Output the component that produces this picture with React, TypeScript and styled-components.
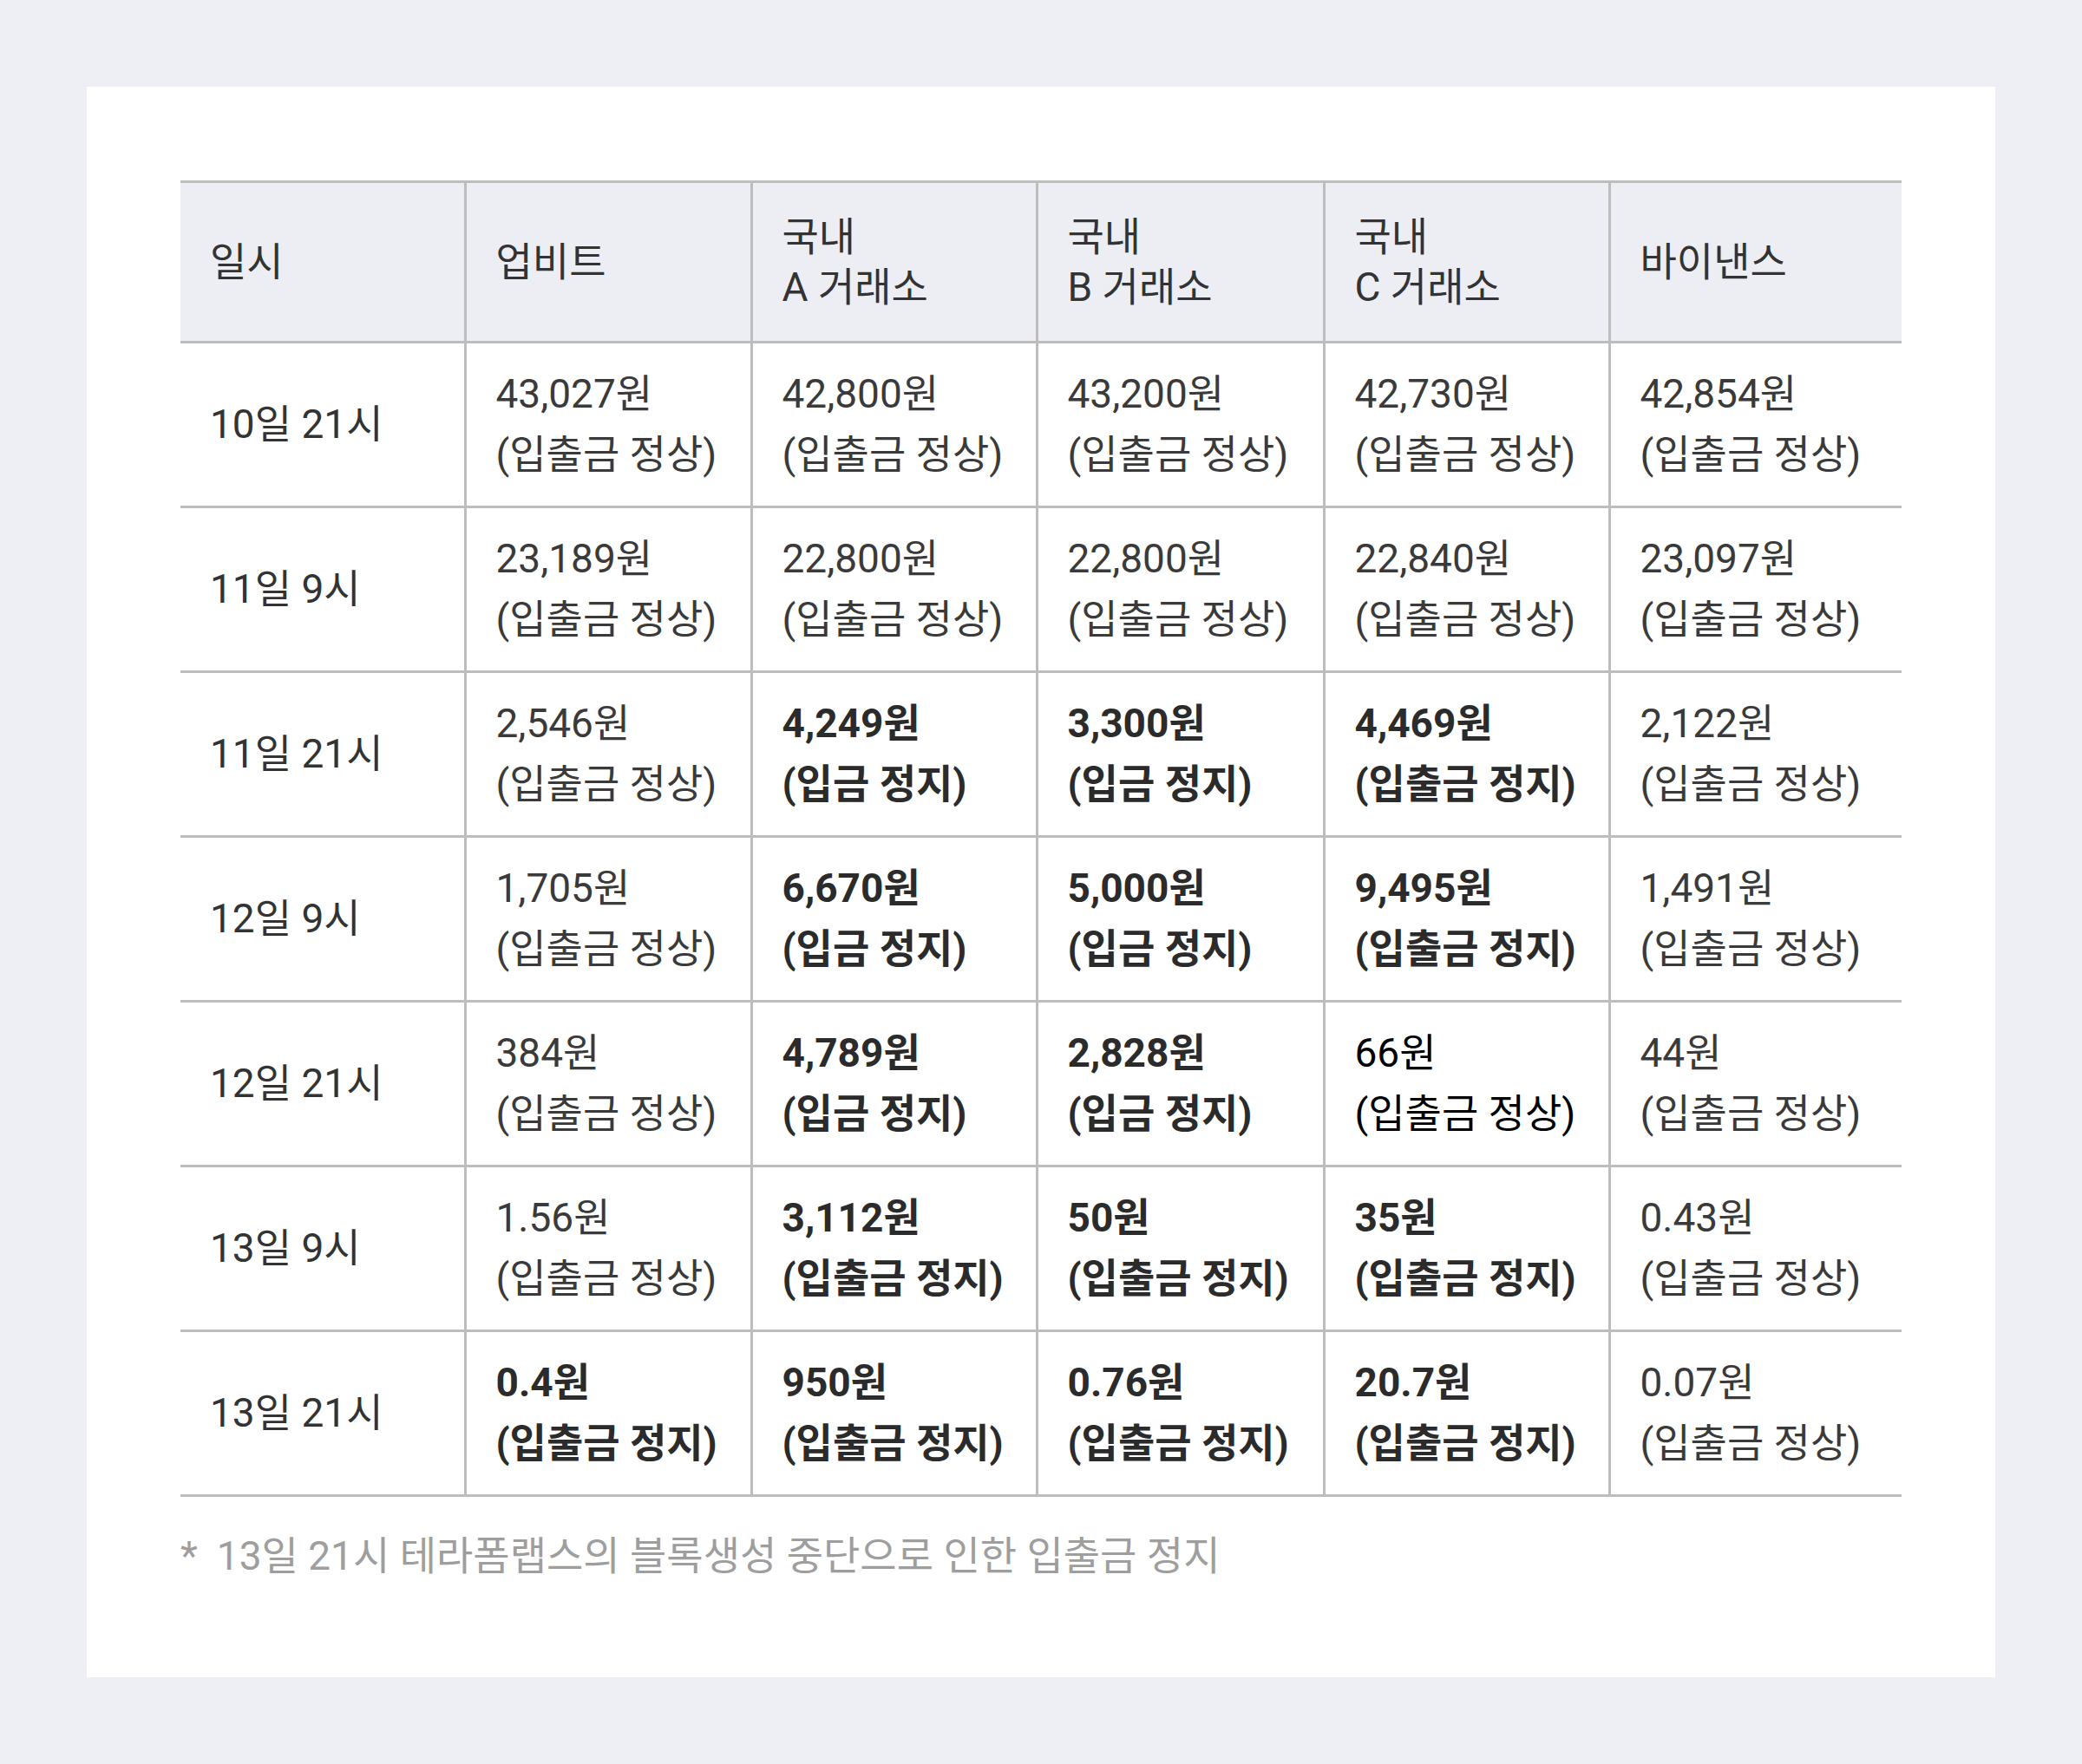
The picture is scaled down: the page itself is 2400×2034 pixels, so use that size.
import styled, { createGlobalStyle } from 'styled-components';

const GlobalStyle = createGlobalStyle`
  html, body {
    margin: 0;
    padding: 0;
    background-color: #eeeff4;
  }
  body {
    font-family: Roboto, "Noto Sans CJK KR", sans-serif;
    color: #333333;
  }
`;

const Page = styled.div`
  padding: 100px;
`;

const Card = styled.section`
  background-color: #ffffff;
  padding: 108px 108px 108px;
`;

const Table = styled.table`
  width: 100%;
  border-collapse: collapse;
  table-layout: fixed;
  border-top: 3px solid #bdbdbd;
`;

const Col = styled.col<{ $width?: number }>`
  width: ${({ $width }) => ($width ? `${$width}px` : 'auto')};
`;

const Th = styled.th`
  text-align: left;
  vertical-align: middle;
  background-color: #edeef3;
  height: 185px;
  padding: 0 34px;
  font-size: 46px;
  line-height: 58px;
  font-weight: 400;
  color: #333333;
  border-bottom: 3px solid #bdbdbd;
  border-left: 3px solid #bdbdbd;
  box-sizing: border-box;

  &:first-child {
    border-left: none;
    padding-left: 34px;
  }
`;

const Td = styled.td`
  vertical-align: middle;
  height: 190px;
  padding: 0 34px 2px;
  font-size: 46px;
  line-height: 70px;
  border-bottom: 3px solid #bdbdbd;
  border-left: 3px solid #bdbdbd;
  box-sizing: border-box;
  white-space: nowrap;

  &:first-child {
    border-left: none;
    padding-left: 34px;
  }
`;

const Value = styled.div<{ $bold?: boolean; $dark?: boolean }>`
  font-weight: ${({ $bold }) => ($bold ? 700 : 400)};
  color: ${({ $bold, $dark }) => ($dark ? '#000000' : $bold ? '#2b2b2b' : '#3a3a3a')};
`;

const Note = styled.p`
  margin: 37px 0 0;
  font-size: 46px;
  line-height: 63px;
  color: #9e9e9e;
  display: flex;
  gap: 22px;
`;

type Cell = { price: string; status: string; bold?: boolean; dark?: boolean };

const ok = (price: string, dark?: boolean): Cell => ({ price, status: '(입출금 정상)', dark });
const stop = (price: string, status: string): Cell => ({ price, status, bold: true });

const colWidths = [328, 330, 329, 331, 329, 0];

const headers = [['일시'], ['업비트'], ['국내', 'A 거래소'], ['국내', 'B 거래소'], ['국내', 'C 거래소'], ['바이낸스']];

const rows: { time: string; cells: Cell[] }[] = [
  { time: '10일 21시', cells: [ok('43,027원'), ok('42,800원'), ok('43,200원'), ok('42,730원'), ok('42,854원')] },
  { time: '11일 9시', cells: [ok('23,189원'), ok('22,800원'), ok('22,800원'), ok('22,840원'), ok('23,097원')] },
  {
    time: '11일 21시',
    cells: [ok('2,546원'), stop('4,249원', '(입금 정지)'), stop('3,300원', '(입금 정지)'), stop('4,469원', '(입출금 정지)'), ok('2,122원')],
  },
  {
    time: '12일 9시',
    cells: [ok('1,705원'), stop('6,670원', '(입금 정지)'), stop('5,000원', '(입금 정지)'), stop('9,495원', '(입출금 정지)'), ok('1,491원')],
  },
  {
    time: '12일 21시',
    cells: [ok('384원'), stop('4,789원', '(입금 정지)'), stop('2,828원', '(입금 정지)'), ok('66원', true), ok('44원')],
  },
  {
    time: '13일 9시',
    cells: [ok('1.56원'), stop('3,112원', '(입출금 정지)'), stop('50원', '(입출금 정지)'), stop('35원', '(입출금 정지)'), ok('0.43원')],
  },
  {
    time: '13일 21시',
    cells: [
      stop('0.4원', '(입출금 정지)'),
      stop('950원', '(입출금 정지)'),
      stop('0.76원', '(입출금 정지)'),
      stop('20.7원', '(입출금 정지)'),
      ok('0.07원'),
    ],
  },
];

export default function App() {
  return (
    <>
      <GlobalStyle />
      <Page>
        <Card>
          <Table>
            <colgroup>
              {colWidths.map((w, i) => (
                <Col key={i} $width={w} />
              ))}
            </colgroup>
            <thead>
              <tr>
                {headers.map((lines) => (
                  <Th key={lines.join('-')}>
                    {lines.map((line) => (
                      <div key={line}>{line}</div>
                    ))}
                  </Th>
                ))}
              </tr>
            </thead>
            <tbody>
              {rows.map((row) => (
                <tr key={row.time}>
                  <Td>{row.time}</Td>
                  {row.cells.map((cell, i) => (
                    <Td key={i}>
                      <Value $bold={cell.bold} $dark={cell.dark}>{cell.price}</Value>
                      <Value $bold={cell.bold} $dark={cell.dark}>{cell.status}</Value>
                    </Td>
                  ))}
                </tr>
              ))}
            </tbody>
          </Table>
          <Note>
            <span>*</span>
            <span>13일 21시 테라폼랩스의 블록생성 중단으로 인한 입출금 정지</span>
          </Note>
        </Card>
      </Page>
    </>
  );
}
